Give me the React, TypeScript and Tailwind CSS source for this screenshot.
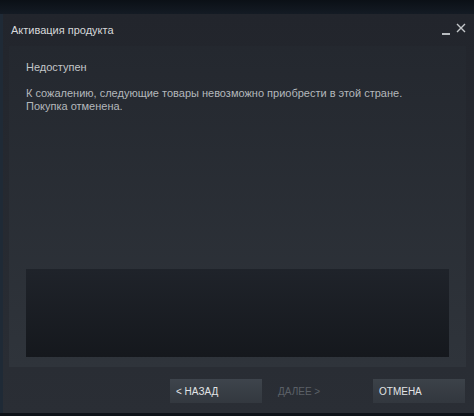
import React from "react";

export default function App() {
  return (
    <div className="w-[474px] h-[416px] bg-[#0e131a] flex flex-col overflow-hidden" style={{ fontFamily: '"Liberation Sans", Arial, sans-serif' }}>
      <div className="h-[14px] bg-[linear-gradient(#0b1016,#141b24)] shrink-0" />
      <div className="flex-1 flex bg-[linear-gradient(#22252c,#2a2e35)]">
        <div className="w-[3px] bg-[#1f2a36] shrink-0" />
        <div className="flex-1 flex flex-col">
          <div className="h-[32px] flex items-center pl-[8px] pr-[8px] shrink-0">
            <span className="text-[11px] text-[#d6d8da]">Активация продукта</span>
            <div className="ml-auto flex items-end gap-[6px] pb-[2px]">
              <div className="w-[8px] h-[2px] bg-[#b8bcc0] mt-[10px]" />
              <svg width="10" height="10" viewBox="0 0 10 10" className="mb-[2px]">
                <path d="M1 1 L9 9 M9 1 L1 9" stroke="#c4c7ca" strokeWidth="1.4" />
              </svg>
            </div>
          </div>
          <div className="mx-[6px] mr-[8px] h-[321px] bg-[linear-gradient(#24282f,#2f343b)] flex flex-col pl-[17px] pr-[17px] pt-[14px]">
            <div className="text-[11px] text-[#c3c6c9] leading-[14px]">Недоступен</div>
            <div className="mt-[13px] text-[11px] text-[#b4b8bc] leading-[13px]">
              К сожалению, следующие товары невозможно приобрести в этой стране.
              <br />
              Покупка отменена.
            </div>
            <div className="mt-auto mb-[10px] h-[88px] bg-[linear-gradient(#1f232a,#15181d)]" />
          </div>
          <div className="flex items-start pt-[12px] pl-[167px] shrink-0">
            <div className="w-[92px] h-[24px] bg-[linear-gradient(#3e444c,#33383f)] flex items-center pl-[6px] text-[10px] text-[#e2e4e6]">&lt; НАЗАД</div>
            <div className="w-[111px] h-[24px] flex items-center pl-[16px] text-[10px] text-[#5b6067]">ДАЛЕЕ &gt;</div>
            <div className="w-[92px] h-[24px] bg-[linear-gradient(#3c4249,#32373e)] flex items-center pl-[6px] text-[10px] text-[#e2e4e6]">ОТМЕНА</div>
          </div>
        </div>
      </div>
      <div className="h-[3px] bg-[#0e1218] shrink-0" />
    </div>
  );
}
